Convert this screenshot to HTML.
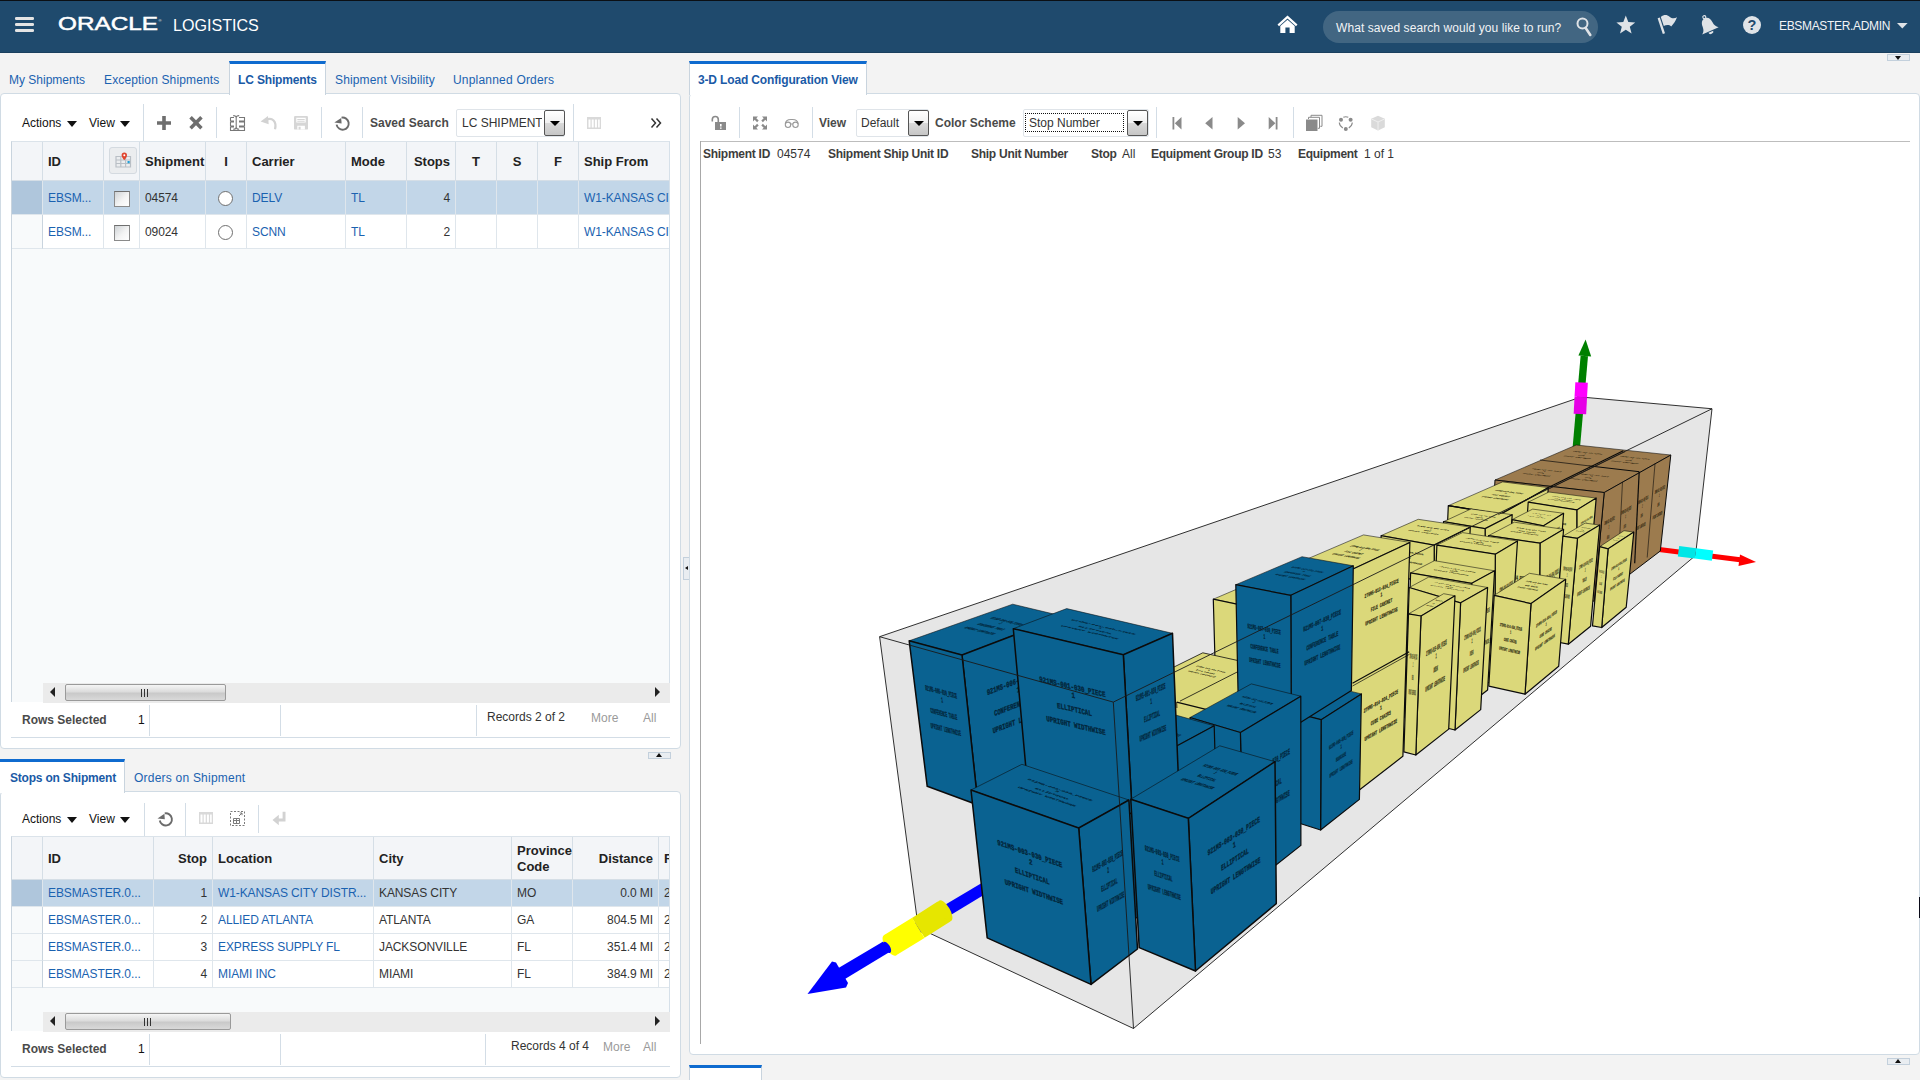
<!DOCTYPE html>
<html lang="en">
<head>
<meta charset="utf-8">
<title>Oracle Logistics - LC Shipments</title>
<style>
*{box-sizing:border-box;margin:0;padding:0}
html,body{width:1920px;height:1080px;overflow:hidden;background:#f3f3f3;font-family:"Liberation Sans",Arial,sans-serif;font-size:12px;color:#333}
.abs{position:absolute}
#hdr{position:absolute;left:0;top:0;width:1920px;height:53px;background:#1f4a6d;border-top:1px solid #0b0f14;border-bottom:1px solid #1a3f5e}
#hdr .t{position:absolute;color:#fff;white-space:nowrap}
.tab{position:absolute;top:72px;height:22px;line-height:16px;color:#1a62b0;white-space:nowrap;font-size:12px}
.tabact{position:absolute;background:#fff;border:1px solid #c9d4de;border-top:3px solid #0f6bcf;border-bottom:none;color:#1a5aa6;font-weight:bold;white-space:nowrap}
.panel{position:absolute;background:#fff;border:1px solid #d0dbe4;border-radius:4px}
.sep{position:absolute;width:1px;background:#d3dde6}
.tx{position:absolute;white-space:nowrap;line-height:14px}
.b{font-weight:bold}
.lnk{color:#1a62b0}
.tbl{position:absolute;border-right:1px solid #d6e0e9;border-left:1px solid #c9d4de;border-top:1px solid #dbe3ea;background-color:#f8fafb;overflow:hidden}
.cell{letter-spacing:-0.1px;position:absolute;border-right:1px solid #dfe6ec;border-bottom:1px solid #dfe6ec;white-space:nowrap;overflow:hidden;padding:0 5px;font-size:12px}
.hd{letter-spacing:0;background:#f3f5f8;font-weight:bold;font-size:13px;color:#222;border-right:1px solid #d5dee6;border-bottom:1px solid #d5dee6}
.sel{background:#c2d6e8}
.wh{background:#fff}
.r{text-align:right}
.dd{position:absolute;background:#fff;border:1px solid #dfe4e9;border-radius:2px}
.ddb{position:absolute;border:1px solid #555;border-radius:2px;background:linear-gradient(#ffffff,#f1f1f1 49%,#d9d9d9 51%,#c6c6c6)}
.ddb:after{content:"";position:absolute;left:50%;top:50%;margin:-2px 0 0 -5px;border:5px solid transparent;border-top:5px solid #000;border-bottom:none}
.sb{position:absolute;background:#ebebeb;height:20px}
.thumb{position:absolute;top:1px;height:17px;border:1px solid #9a9a9a;border-radius:2px;background:linear-gradient(#f5f5f5,#dcdcdc 45%,#c9c9c9 55%,#d9d9d9)}
.grip{position:absolute;top:4px;width:1px;height:8px;background:#333}
.arl{position:absolute;width:0;height:0;border:5px solid transparent;border-right:5px solid #222;border-left:none}
.arr{position:absolute;width:0;height:0;border:5px solid transparent;border-left:5px solid #222;border-right:none}
.gray{color:#9a9a9a}
</style>
</head>
<body>
<div id="hdr">
<svg class="abs" style="left:0;top:-1px" width="1920" height="53" viewBox="0 0 1920 53">
 <!-- hamburger -->
 <g fill="#e4e4e4"><rect x="15" y="17" width="19" height="3" rx="1.3"/><rect x="15" y="23" width="19" height="3" rx="1.3"/><rect x="15" y="29" width="19" height="3" rx="1.3"/></g>
 <!-- ORACLE wordmark -->
 <text x="58" y="30" font-family="Liberation Sans, Arial, sans-serif" font-size="17.6" fill="#fff" stroke="#fff" stroke-width="0.45" textLength="100" lengthAdjust="spacingAndGlyphs">ORACLE</text>
 <text x="158.5" y="21.5" font-family="Liberation Sans, Arial, sans-serif" font-size="4" fill="#fff">®</text>
 <!-- home -->
 <g fill="#fff"><path d="M1287.5 15.5 L1277.5 24.6 L1279 26.2 L1287.5 18.6 L1296 26.2 L1297.5 24.6 Z"/><path d="M1280.3 26 L1287.5 19.8 L1294.7 26 L1294.7 33 L1289.6 33 L1289.6 27.6 L1285.4 27.6 L1285.4 33 L1280.3 33 Z"/></g>
 <!-- search pill -->
 <rect x="1323" y="11" width="275" height="32" rx="16" fill="#426682"/>
 <g fill="none" stroke="#dfe3e7" stroke-width="2"><circle cx="1582.5" cy="23.5" r="5"/><path d="M1585.5 27.8 L1590.3 35" stroke-width="2.6" stroke-linecap="round"/></g>
 <!-- star -->
 <path fill="#dfe3e7" d="M1625.8 15.6 L1628.3 22.1 L1635.2 22.4 L1629.8 26.8 L1631.6 33.4 L1625.8 29.7 L1620 33.4 L1621.8 26.8 L1616.4 22.4 L1623.3 22.1 Z"/>
 <!-- flag -->
 <g fill="#dfe3e7"><path d="M1657.6 18.2 L1659.8 17.4 L1665 33.2 L1662.8 34 Z"/><path d="M1660.8 17 C1664 14.4 1667 14.6 1669.6 16.8 C1672 18.8 1674.6 18.8 1677 17.2 C1675.6 21 1673.4 24.2 1671.2 26.4 C1669.4 24.6 1666.4 24.4 1663.8 26 Z"/></g>
 <!-- bell -->
 <g fill="#dfe3e7" transform="translate(1707.9 25.2) rotate(-24)"><path d="M0 -7.6 C3.6 -7.6 5.2 -4.4 5.4 -0.8 C5.6 2.6 6.6 4.4 9 6.2 L-9 6.2 C-6.600 4.400 -5.600 2.600 -5.400 -0.800 C-5.200 -4.400 -3.600 -7.600 0 -7.600 Z"/><circle cx="0" cy="-8.8" r="1.5" fill="none" stroke="#dfe3e7" stroke-width="1.1"/><path d="M-2.600 7.200 L2.600 7.200 A2.600 2.200 0 0 1 -2.600 7.200 Z"/></g>
 <!-- help -->
 <circle cx="1752" cy="25" r="9" fill="#dfe3e7"/>
 <text x="1752" y="30.2" text-anchor="middle" font-family="Liberation Sans, Arial, sans-serif" font-weight="bold" font-size="14.5" fill="#1f4a6d">?</text>
 <!-- user arrow -->
 <path fill="#dfe3e7" d="M1897 23 L1907.6 23 L1902.3 28.4 Z"/>
</svg>
<div class="t" style="left:173px;top:14px;font-size:16.1px;line-height:20px">LOGISTICS</div>
<div class="t" style="left:1336px;top:19px;font-size:12px;line-height:16px;letter-spacing:0.08px;color:#f2f4f6">What saved search would you like to run?</div>
<div class="t" style="left:1779px;top:17px;font-size:12px;line-height:16px;letter-spacing:-0.33px;color:#f2f4f6">EBSMASTER.ADMIN</div>
</div>
<div id="left">
<div class="tab" style="left:9px;top:72px">My Shipments</div>
<div class="tab" style="left:104px;top:72px;letter-spacing:0.14px">Exception Shipments</div>
<div class="tab" style="left:335px;top:72px;letter-spacing:0.15px">Shipment Visibility</div>
<div class="tab" style="left:453px;top:72px;letter-spacing:0.2px">Unplanned Orders</div>
<div class="panel" style="left:0;top:93px;width:681px;height:656px"></div>
<div class="tabact" style="left:229px;top:61px;width:97px;height:34px;padding:8px 0 0 8px;line-height:16px;letter-spacing:-0.15px">LC Shipments</div>
<div class="tx" style="left:22px;top:116px;color:#111">Actions</div>
<div class="abs" style="left:67px;top:121px;border:5px solid transparent;border-top:6px solid #111;border-bottom:none"></div>
<div class="tx" style="left:89px;top:116px;color:#111">View</div>
<div class="abs" style="left:120px;top:121px;border:5px solid transparent;border-top:6px solid #111;border-bottom:none"></div>
<div class="sep" style="left:143px;top:104px;height:37px"></div>
<div class="sep" style="left:216px;top:107px;height:31px"></div>
<div class="sep" style="left:321px;top:107px;height:31px"></div>
<div class="sep" style="left:362px;top:107px;height:31px"></div>
<div class="sep" style="left:573px;top:104px;height:37px"></div>
<svg class="abs" style="left:0;top:100px" width="680" height="44" viewBox="0 100 680 44">
<g fill="#6e6e6e">
 <path d="M162.2 116 h3.600 v5.200 h5.200 v3.600 h-5.200 v5.200 h-3.600 v-5.200 h-5.200 v-3.600 h5.200z"/>
 <path d="M189.300 118.500 L191.800 116 L196 120.200 L200.200 116 L202.700 118.500 L198.500 122.700 L202.700 126.900 L200.200 129.400 L196 125.200 L191.800 129.400 L189.300 126.900 L193.500 122.700Z"/>
</g>
<g fill="none" stroke="#777" stroke-width="1.100">
 <path d="M233.200 115.600 c1.700 0 3 .6 3 2 v9.600 c0 1.400 -1.300 2 -3 2 M239.200 115.600 c-1.700 0 -3 .6 -3 2 M236.200 127.200 c0 1.400 1.300 2 3 2"/>
 <path d="M230.500 117.500 h3.500 M230.500 117.500 v3.500 h3.500 M230.500 122 v4 h3.500 M230.500 122 h3.500 M230.500 127 v3.500 h14 v-3.500 M230.500 127 h3.500 M239 117.500 h5.500 v3.500 h-5.500 M239 122 h5.500 v4 h-5.500 M239 127 h5.500"/>
</g>
<path fill="none" stroke="#d2d2d2" stroke-width="2.200" d="M266.500 119.800 c5.500 -2.600 10.500 1.500 8.500 9.500"/>
<path fill="#d2d2d2" d="M260.600 121.500 l7.400 -5.500 l.7 8.300z"/>
<g><rect x="294" y="116" width="14" height="13.600" rx="1.200" fill="#d6d6d6"/><path fill="#fff" d="M296.300 117.800 h9.400 v4.800 h-9.400z M297.300 125.800 h7.600 v3.800 h-7.600z"/><path fill="#d6d6d6" d="M297.300 119 h7.400 v.9 h-7.400z M297.300 120.800 h7.400 v.9 h-7.400z M298.600 126.800 h2 v2.800 h-2z"/></g>
<path fill="none" stroke="#6b6b6b" stroke-width="1.9" d="M341.54 117.59 A6.1 6.1 0 1 1 336.59 124.66"/><path fill="#6b6b6b" d="M334.30 122.60 L341.20 118.00 L341.60 123.40Z"/>
<g fill="#d9d9d9"><path d="M587 117 h14 v12 h-14z"/><path fill="#fff" d="M588.500 119.500 h2 v8 h-2z M591.700 119.500 h2 v8 h-2z M594.900 119.500 h2 v8 h-2z M598.100 119.500 h1.600 v8 h-1.600z"/></g>
<g fill="none" stroke="#333" stroke-width="1.500"><path d="M651.500 118.500 l4 4.500 l-4 4.500 M656.500 118.500 l4 4.500 l-4 4.500"/></g>
</svg>

<div class="tx b" style="left:370px;top:116px;color:#4a4a4a">Saved Search</div>
<div class="dd" style="left:456px;top:109px;width:109px;height:28px"></div>
<div class="tx" style="left:462px;top:116px;color:#333;width:80px;overflow:hidden">LC SHIPMENT</div>
<div class="ddb" style="left:544px;top:110px;width:21px;height:26px"></div>
<div class="tbl" style="left:11px;top:141px;width:659px;height:561px">
<div class="cell hd" style="left:0px;top:0;width:31px;height:39px;line-height:39.5px"></div>
<div class="cell hd" style="left:31px;top:0;width:61px;height:39px;line-height:39.5px">ID</div>
<div class="cell hd" style="left:92px;top:0;width:36px;height:39px;line-height:39.5px"><span style="position:absolute;left:5px;top:5px;width:28px;height:27px;border:1px solid #d4dae0;border-radius:3px;background:#ebedef"><svg width="26" height="25" viewBox="0 0 26 25" style="position:absolute;left:0;top:0"><g fill="none" stroke="#b9bfc5" stroke-width="1.200"><path d="M6 8.500 h14.500 v10.500 h-14.500z M6 12 h14.500 M6 15.500 h14.500 M10.800 8.500 v10.500 M15.600 8.500 v10.500"/></g><path fill="#e0452f" d="M14.300 4.500 a2.700 2.700 0 0 1 2.700 2.700 c0 2 -2.700 5 -2.700 5 c0 0 -2.700 -3 -2.700 -5 a2.700 2.700 0 0 1 2.700 -2.700z"/><circle cx="14.300" cy="7.200" r="1" fill="#fff"/><rect x="17.500" y="13" width="2.200" height="2.200" fill="#21a0d8"/></svg></span></div>
<div class="cell hd" style="left:128px;top:0;width:66px;height:39px;line-height:39.5px">Shipment</div>
<div class="cell hd" style="left:194px;top:0;width:41px;height:39px;line-height:39.5px;text-align:center">I</div>
<div class="cell hd" style="left:235px;top:0;width:99px;height:39px;line-height:39.5px">Carrier</div>
<div class="cell hd" style="left:334px;top:0;width:61px;height:39px;line-height:39.5px">Mode</div>
<div class="cell hd r" style="left:395px;top:0;width:49px;height:39px;line-height:39.5px">Stops</div>
<div class="cell hd" style="left:444px;top:0;width:41px;height:39px;line-height:39.5px;text-align:center">T</div>
<div class="cell hd" style="left:485px;top:0;width:41px;height:39px;line-height:39.5px;text-align:center">S</div>
<div class="cell hd" style="left:526px;top:0;width:41px;height:39px;line-height:39.5px;text-align:center">F</div>
<div class="cell hd" style="left:567px;top:0;width:100px;height:39px;line-height:39.5px">Ship From</div>
<div class="cell sel" style="left:0px;top:39px;width:31px;height:34px;line-height:35px;background:#afc6dc"></div>
<div class="cell sel" style="left:31px;top:39px;width:61px;height:34px;line-height:35px"><span class="lnk">EBSM...</span></div>
<div class="cell sel" style="left:92px;top:39px;width:36px;height:34px;line-height:35px"><span style="display:inline-block;width:16px;height:16px;border:1px solid #8a8a8a;border-top-color:#6f6f6f;background:linear-gradient(135deg,#cfd3d6,#f4f4f4 55%,#fff);vertical-align:middle;margin:1px 0 0 5px"></span></div>
<div class="cell sel" style="left:128px;top:39px;width:66px;height:34px;line-height:35px">04574</div>
<div class="cell sel" style="left:194px;top:39px;width:41px;height:34px;line-height:35px"><span style="display:inline-block;width:15px;height:15px;border:1.500px solid #6f6f6f;border-radius:50%;background:#fff;vertical-align:middle;margin:0 0 0 7px"></span></div>
<div class="cell sel" style="left:235px;top:39px;width:99px;height:34px;line-height:35px"><span class="lnk">DELV</span></div>
<div class="cell sel" style="left:334px;top:39px;width:61px;height:34px;line-height:35px"><span class="lnk">TL</span></div>
<div class="cell sel r" style="left:395px;top:39px;width:49px;height:34px;line-height:35px">4</div>
<div class="cell sel" style="left:444px;top:39px;width:41px;height:34px;line-height:35px"></div>
<div class="cell sel" style="left:485px;top:39px;width:41px;height:34px;line-height:35px"></div>
<div class="cell sel" style="left:526px;top:39px;width:41px;height:34px;line-height:35px"></div>
<div class="cell sel" style="left:567px;top:39px;width:100px;height:34px;line-height:35px"><span class="lnk">W1-KANSAS CITY</span></div>
<div class="cell wh" style="left:0px;top:73px;width:31px;height:34px;line-height:35px;background:#f8fafb;border-right:1px solid #c9d4de"></div>
<div class="cell wh" style="left:31px;top:73px;width:61px;height:34px;line-height:35px"><span class="lnk">EBSM...</span></div>
<div class="cell wh" style="left:92px;top:73px;width:36px;height:34px;line-height:35px"><span style="display:inline-block;width:16px;height:16px;border:1px solid #8a8a8a;border-top-color:#6f6f6f;background:linear-gradient(135deg,#cfd3d6,#f4f4f4 55%,#fff);vertical-align:middle;margin:1px 0 0 5px"></span></div>
<div class="cell wh" style="left:128px;top:73px;width:66px;height:34px;line-height:35px">09024</div>
<div class="cell wh" style="left:194px;top:73px;width:41px;height:34px;line-height:35px"><span style="display:inline-block;width:15px;height:15px;border:1.500px solid #6f6f6f;border-radius:50%;background:#fff;vertical-align:middle;margin:0 0 0 7px"></span></div>
<div class="cell wh" style="left:235px;top:73px;width:99px;height:34px;line-height:35px"><span class="lnk">SCNN</span></div>
<div class="cell wh" style="left:334px;top:73px;width:61px;height:34px;line-height:35px"><span class="lnk">TL</span></div>
<div class="cell wh r" style="left:395px;top:73px;width:49px;height:34px;line-height:35px">2</div>
<div class="cell wh" style="left:444px;top:73px;width:41px;height:34px;line-height:35px"></div>
<div class="cell wh" style="left:485px;top:73px;width:41px;height:34px;line-height:35px"></div>
<div class="cell wh" style="left:526px;top:73px;width:41px;height:34px;line-height:35px"></div>
<div class="cell wh" style="left:567px;top:73px;width:100px;height:34px;line-height:35px"><span class="lnk">W1-KANSAS CITY</span></div>
</div>
<div class="sb" style="left:43px;top:683px;width:627px"><div class="arl" style="left:7px;top:4px"></div><div class="thumb" style="left:22px;width:161px"><div class="grip" style="left:75px"></div><div class="grip" style="left:78px"></div><div class="grip" style="left:81px"></div></div><div class="arr" style="left:612px;top:4px"></div></div>
<div class="tx b" style="left:22px;top:713px;color:#4a4a4a">Rows Selected</div>
<div class="tx" style="left:138px;top:713px;color:#111">1</div>
<div class="sep" style="left:149px;top:705px;height:31px"></div>
<div class="sep" style="left:280px;top:705px;height:31px"></div>
<div class="sep" style="left:476px;top:705px;height:31px"></div>
<div class="tx" style="left:487px;top:710px;color:#333">Records 2 of 2</div>
<div class="tx gray" style="left:591px;top:711px">More</div>
<div class="tx gray" style="left:643px;top:711px">All</div>
<div class="abs" style="left:11px;top:737px;width:659px;height:1px;background:#d3dde6"></div>
<div class="abs" style="left:648px;top:752px;width:23px;height:7px;border:1px solid #c3d0dc;background:#e9edf1"></div><div class="abs" style="left:656px;top:753px;border:3.500px solid transparent;border-bottom:4px solid #111;border-top:none"></div>
<div class="tab" style="left:134px;top:770px;letter-spacing:0.22px">Orders on Shipment</div>
<div class="panel" style="left:0;top:791px;width:681px;height:287px"></div>
<div class="tabact" style="left:0;top:759px;width:125px;height:34px;padding:8px 0 0 10px;line-height:16px;letter-spacing:-0.2px;border-left:none">Stops on Shipment</div>
<div class="tx" style="left:22px;top:812px;color:#111">Actions</div>
<div class="abs" style="left:67px;top:817px;border:5px solid transparent;border-top:6px solid #111;border-bottom:none"></div>
<div class="tx" style="left:89px;top:812px;color:#111">View</div>
<div class="abs" style="left:120px;top:817px;border:5px solid transparent;border-top:6px solid #111;border-bottom:none"></div>
<div class="sep" style="left:144px;top:803px;height:33px"></div>
<div class="sep" style="left:185px;top:803px;height:33px"></div>
<div class="sep" style="left:258px;top:805px;height:28px"></div>
<svg class="abs" style="left:0;top:800px" width="680" height="40" viewBox="0 800 680 40">
<path fill="none" stroke="#6b6b6b" stroke-width="1.9" d="M164.74 813.39 A6.1 6.1 0 1 1 159.79 820.46"/><path fill="#6b6b6b" d="M157.50 818.40 L164.40 813.80 L164.80 819.20Z"/>
<g fill="#d9d9d9"><path d="M199 812 h14 v12 h-14z"/><path fill="#fff" d="M200.500 814.500 h2 v8 h-2z M203.700 814.500 h2 v8 h-2z M206.900 814.500 h2 v8 h-2z M210.100 814.500 h1.600 v8 h-1.600z"/></g>
<g fill="none" stroke="#7b7b7b" stroke-width="1" stroke-dasharray="2 1.500"><path d="M230.500 811.500 h14 v14 h-14z"/></g>
<g fill="none" stroke="#7b7b7b" stroke-width="1"><path d="M233.500 818.500 h6 v5 h-6z M233.500 820.500 h6 M236.500 818.500 v5 M239 816 l3 -3 M239.800 813 h2.200 v2.200"/></g>
<g fill="#d2d2d2"><path d="M282.600 811.800 h2.900 v9.800 h-6.700 v3.600 l-6.300 -5.200 l6.300 -5.200 v3.600 h3.800z"/></g>
</svg>

<div class="tbl" style="left:11px;top:836px;width:659px;height:195px">
<div class="cell hd" style="left:0px;top:0;width:31px;height:43px;line-height:43.5px"></div>
<div class="cell hd" style="left:31px;top:0;width:111px;height:43px;line-height:43.5px">ID</div>
<div class="cell hd r" style="left:142px;top:0;width:59px;height:43px;line-height:43.5px">Stop</div>
<div class="cell hd" style="left:201px;top:0;width:161px;height:43px;line-height:43.5px">Location</div>
<div class="cell hd" style="left:362px;top:0;width:138px;height:43px;line-height:43.5px">City</div>
<div class="cell hd" style="left:500px;top:0;width:61px;height:43px;line-height:43.5px;line-height:16px;padding-top:6px">Province<br>Code</div>
<div class="cell hd r" style="left:561px;top:0;width:86px;height:43px;line-height:43.5px">Distance</div>
<div class="cell hd" style="left:647px;top:0;width:20px;height:43px;line-height:43.5px">R</div>
<div class="cell sel" style="left:0px;top:43px;width:31px;height:27px;line-height:27px;background:#afc6dc"></div>
<div class="cell sel" style="left:31px;top:43px;width:111px;height:27px;line-height:27px"><span class="lnk">EBSMASTER.0...</span></div>
<div class="cell sel r" style="left:142px;top:43px;width:59px;height:27px;line-height:27px">1</div>
<div class="cell sel" style="left:201px;top:43px;width:161px;height:27px;line-height:27px"><span class="lnk">W1-KANSAS CITY DISTR...</span></div>
<div class="cell sel" style="left:362px;top:43px;width:138px;height:27px;line-height:27px">KANSAS CITY</div>
<div class="cell sel" style="left:500px;top:43px;width:61px;height:27px;line-height:27px">MO</div>
<div class="cell sel r" style="left:561px;top:43px;width:86px;height:27px;line-height:27px">0.0 MI</div>
<div class="cell sel" style="left:647px;top:43px;width:20px;height:27px;line-height:27px">2</div>
<div class="cell wh" style="left:0px;top:70px;width:31px;height:27px;line-height:27px;background:#f8fafb;border-right:1px solid #c9d4de"></div>
<div class="cell wh" style="left:31px;top:70px;width:111px;height:27px;line-height:27px"><span class="lnk">EBSMASTER.0...</span></div>
<div class="cell wh r" style="left:142px;top:70px;width:59px;height:27px;line-height:27px">2</div>
<div class="cell wh" style="left:201px;top:70px;width:161px;height:27px;line-height:27px"><span class="lnk">ALLIED ATLANTA</span></div>
<div class="cell wh" style="left:362px;top:70px;width:138px;height:27px;line-height:27px">ATLANTA</div>
<div class="cell wh" style="left:500px;top:70px;width:61px;height:27px;line-height:27px">GA</div>
<div class="cell wh r" style="left:561px;top:70px;width:86px;height:27px;line-height:27px">804.5 MI</div>
<div class="cell wh" style="left:647px;top:70px;width:20px;height:27px;line-height:27px">2</div>
<div class="cell wh" style="left:0px;top:97px;width:31px;height:27px;line-height:27px;background:#f8fafb;border-right:1px solid #c9d4de"></div>
<div class="cell wh" style="left:31px;top:97px;width:111px;height:27px;line-height:27px"><span class="lnk">EBSMASTER.0...</span></div>
<div class="cell wh r" style="left:142px;top:97px;width:59px;height:27px;line-height:27px">3</div>
<div class="cell wh" style="left:201px;top:97px;width:161px;height:27px;line-height:27px"><span class="lnk">EXPRESS SUPPLY FL</span></div>
<div class="cell wh" style="left:362px;top:97px;width:138px;height:27px;line-height:27px">JACKSONVILLE</div>
<div class="cell wh" style="left:500px;top:97px;width:61px;height:27px;line-height:27px">FL</div>
<div class="cell wh r" style="left:561px;top:97px;width:86px;height:27px;line-height:27px">351.4 MI</div>
<div class="cell wh" style="left:647px;top:97px;width:20px;height:27px;line-height:27px">2</div>
<div class="cell wh" style="left:0px;top:124px;width:31px;height:27px;line-height:27px;background:#f8fafb;border-right:1px solid #c9d4de"></div>
<div class="cell wh" style="left:31px;top:124px;width:111px;height:27px;line-height:27px"><span class="lnk">EBSMASTER.0...</span></div>
<div class="cell wh r" style="left:142px;top:124px;width:59px;height:27px;line-height:27px">4</div>
<div class="cell wh" style="left:201px;top:124px;width:161px;height:27px;line-height:27px"><span class="lnk">MIAMI INC</span></div>
<div class="cell wh" style="left:362px;top:124px;width:138px;height:27px;line-height:27px">MIAMI</div>
<div class="cell wh" style="left:500px;top:124px;width:61px;height:27px;line-height:27px">FL</div>
<div class="cell wh r" style="left:561px;top:124px;width:86px;height:27px;line-height:27px">384.9 MI</div>
<div class="cell wh" style="left:647px;top:124px;width:20px;height:27px;line-height:27px">2</div>
</div>
<div class="sb" style="left:43px;top:1012px;width:627px"><div class="arl" style="left:7px;top:4px"></div><div class="thumb" style="left:22px;width:166px"><div class="grip" style="left:78px"></div><div class="grip" style="left:81px"></div><div class="grip" style="left:84px"></div></div><div class="arr" style="left:612px;top:4px"></div></div>
<div class="tx b" style="left:22px;top:1042px;color:#4a4a4a">Rows Selected</div>
<div class="tx" style="left:138px;top:1042px;color:#111">1</div>
<div class="sep" style="left:149px;top:1034px;height:31px"></div>
<div class="sep" style="left:280px;top:1034px;height:31px"></div>
<div class="sep" style="left:485px;top:1034px;height:31px"></div>
<div class="tx" style="left:511px;top:1039px;color:#333">Records 4 of 4</div>
<div class="tx gray" style="left:603px;top:1040px">More</div>
<div class="tx gray" style="left:643px;top:1040px">All</div>
<div class="abs" style="left:11px;top:1066px;width:659px;height:1px;background:#d3dde6"></div>
<div class="abs" style="left:683px;top:557px;width:7px;height:23px;border:1px solid #c3d0dc;border-right-color:#d3dde6;background:#e9edf1"></div><div class="abs" style="left:685px;top:566px;border:2.700px solid transparent;border-right:3.300px solid #111;border-left:none"></div>
</div>
<div id="right">
<div class="panel" style="left:689px;top:93px;width:1231px;height:962px;border-radius:4px"></div>
<div class="tabact" style="left:689px;top:61px;width:178px;height:34px;padding:8px 0 0 8px;line-height:16px;letter-spacing:-0.15px">3-D Load Configuration View</div>
<div class="abs" style="left:1887px;top:54px;width:23px;height:7px;border:1px solid #c3d0dc;background:#e9edf1"></div><div class="abs" style="left:1895px;top:56px;border:3.500px solid transparent;border-top:4px solid #111;border-bottom:none"></div>
<div class="abs" style="left:1887px;top:1058px;width:23px;height:7px;border:1px solid #c3d0dc;background:#e9edf1"></div><div class="abs" style="left:1895px;top:1059px;border:3.500px solid transparent;border-bottom:4px solid #111;border-top:none"></div>
<div class="abs" style="left:689px;top:1065px;width:73px;height:15px;background:#fff;border:1px solid #c9d4de;border-top:3px solid #0f6bcf;border-bottom:none"></div>
<div class="sep" style="left:739px;top:107px;height:31px"></div>
<div class="sep" style="left:812px;top:107px;height:31px"></div>
<div class="sep" style="left:1156px;top:107px;height:31px"></div>
<div class="sep" style="left:1293px;top:107px;height:31px"></div>
<div class="tx b" style="left:819px;top:116px;color:#4a4a4a">View</div>
<div class="dd" style="left:856px;top:109px;width:73px;height:28px"></div>
<div class="tx" style="left:861px;top:116px;color:#333">Default</div>
<div class="ddb" style="left:908px;top:110px;width:21px;height:26px"></div>
<div class="tx b" style="left:935px;top:116px;color:#4a4a4a">Color Scheme</div>
<div class="dd" style="left:1023px;top:109px;width:126px;height:28px"></div>
<div class="abs" style="left:1025px;top:113px;width:99px;height:19px;border:1px dotted #111"></div>
<div class="tx" style="left:1029px;top:116px;color:#333">Stop Number</div>
<div class="ddb" style="left:1127px;top:110px;width:21px;height:26px"></div>
<svg class="abs" style="left:700px;top:105px" width="720" height="36" viewBox="700 105 720 36">
<g fill="#8a8a8a"><path d="M715 122 h11 v8 h-11z"/><path fill="#fff" d="M720 124 h1.600 v2.600 h-1.600z M720 127.400 h1.600 v1.400 h-1.600z"/></g>
<path fill="none" stroke="#8a8a8a" stroke-width="1.600" d="M712.300 121.500 v-2 a3 3 0 0 1 6 0 v2.500"/>
<g fill="#8a8a8a">
 <path d="M753 116.500 h5 l-1.700 1.700 l2.400 2.400 l-1.600 1.600 l-2.400 -2.400 l-1.700 1.700z"/>
 <path d="M767 116.500 v5 l-1.700 -1.700 l-2.400 2.400 l-1.600 -1.600 l2.400 -2.400 l-1.700 -1.700z"/>
 <path d="M753 129.500 v-5 l1.700 1.700 l2.400 -2.400 l1.600 1.600 l-2.400 2.400 l1.700 1.700z"/>
 <path d="M767 129.500 h-5 l1.700 -1.700 l-2.400 -2.400 l1.600 -1.600 l2.400 2.400 l1.700 -1.700z"/>
</g>
<g fill="none" stroke="#9a9a9a" stroke-width="1.100"><circle cx="788" cy="124.800" r="2.700"/><circle cx="795.500" cy="124.800" r="2.700"/><path d="M790.700 124 h2.100 M785.300 123.800 c.3 -3.500 3 -4.500 6.400 -4.300 c3.400 -.2 6.100 .8 6.400 4.300"/></g>
<g fill="#8a8a8a">
 <path d="M1172.500 117 h1.800 v12.500 h-1.800z M1181.500 117 v12.500 l-6.700 -6.250z"/>
 <path d="M1212.500 117 v12.500 l-7.300 -6.250z"/>
 <path d="M1237.700 117 v12.500 l7.300 -6.250z"/>
 <path d="M1275.700 117 h1.800 v12.500 h-1.800z M1268.700 117 v12.500 l6.700 -6.250z"/>
 <path d="M1306 119.500 h11.500 v11.500 h-11.500z"/>
</g>
<g fill="none" stroke="#8a8a8a" stroke-width="1"><path d="M1308.500 119 v-1.700 h11 v11 h-1.700 M1311 117 v-1.700 h11 v11 h-1.700"/></g>
<g fill="#8a8a8a"><circle cx="1341" cy="119.800" r="2"/><circle cx="1350.600" cy="119.800" r="2"/><circle cx="1345.800" cy="129" r="2"/></g>
<g fill="none" stroke="#8a8a8a" stroke-width="1.100"><path d="M1343.300 117.300 q2.500 -1.200 5 0 M1352.300 122.500 q0 3 -3.500 5.500 M1342.800 128 q-3.500 -2.500 -3.500 -5.500"/></g>
<g fill="#dadada"><path d="M1378 115.800 l6.800 3 v8.400 l-6.800 3.400 l-6.800 -3.400 v-8.400z"/></g>
<g fill="none" stroke="#efefef" stroke-width="1"><path d="M1371.500 119 l6.500 3 l6.500 -3 M1378 122 v8.500"/></g>
</svg>
<div class="abs" style="left:700px;top:141px;width:1210px;height:1px;background:#bdbdbd"></div>
<div class="abs" style="left:700px;top:141px;width:1px;height:903px;background:#a8a8a8"></div>
<div class="tx b" style="left:703px;top:147px;letter-spacing:-0.27px;color:#3d3d3d">Shipment ID</div>
<div class="tx" style="left:777px;top:147px;color:#333">04574</div>
<div class="tx b" style="left:828px;top:147px;letter-spacing:-0.27px;color:#3d3d3d">Shipment Ship Unit ID</div>
<div class="tx b" style="left:971px;top:147px;letter-spacing:-0.27px;color:#3d3d3d">Ship Unit Number</div>
<div class="tx b" style="left:1091px;top:147px;letter-spacing:-0.27px;color:#3d3d3d">Stop</div>
<div class="tx" style="left:1122px;top:147px;color:#333">All</div>
<div class="tx b" style="left:1151px;top:147px;letter-spacing:-0.27px;color:#3d3d3d">Equipment Group ID</div>
<div class="tx" style="left:1268px;top:147px;color:#333">53</div>
<div class="tx b" style="left:1298px;top:147px;letter-spacing:-0.27px;color:#3d3d3d">Equipment</div>
<div class="tx" style="left:1364px;top:147px;color:#333">1 of 1</div>
<svg class="abs" style="left:701px;top:142px" width="1209" height="902" viewBox="701 142 1209 902">
<polygon points="879.6,636.7 1581.0,397.0 1712.0,408.8 1695.5,555.5 1133.5,1028.5 918.3,927.9" fill="#e6e6e6"/>
<line x1="1568.4" y1="538" x2="1584.3" y2="356" stroke="#008000" stroke-width="7.4"/>
<polygon points="1585.6,339.5 1591.2,356.5 1578.4,355.5" fill="#008000"/>
<line x1="1568.4" y1="538" x2="1742" y2="560" stroke="#ff0000" stroke-width="5.2"/>
<polygon points="1756,562 1738.5,566 1740,554.5" fill="#ff0000"/>
<polygon points="1568.4,535 1568.4,541 842.5,980.5 836,969.5" fill="#0000ff"/>
<polygon points="807.5,994 832,961.5 836,962.5 848,983 846,987.5" fill="#0000ff"/>
<g fill="#9c7b4e" stroke="#0b0b0b" stroke-width="1.0" stroke-linejoin="round">
<polygon points="1495.0,480.0 1576.2,445.0 1670.8,455.0 1604.2,492.5" stroke-width="0.55"/>
<polygon points="1604.2,492.5 1670.8,455.0 1660.3,551.0 1594.3,601.2"/>
<polygon points="1495.0,480.0 1604.2,492.5 1594.3,601.2 1489.1,582.8"/>
</g>
<line x1="1548.3" y1="487.5" x2="1623.3" y2="450.8" stroke="#0b0b0b" stroke-width="1.2"/>
<line x1="1550.0" y1="488.3" x2="1625.0" y2="451.7" stroke="#0b0b0b" stroke-width="0.6"/>
<line x1="1588.3" y1="465.8" x2="1639.2" y2="471.7" stroke="#0b0b0b" stroke-width="1.0"/>
<line x1="1540.0" y1="460.0" x2="1588.3" y2="465.8" stroke="#0b0b0b" stroke-width="0.7"/>
<line x1="1639.2" y1="471.7" x2="1634.7" y2="563.3" stroke="#0b0b0b" stroke-width="1.2"/>
<line x1="1622.5" y1="482.0" x2="1619.2" y2="546.7" stroke="#0b0b0b" stroke-width="0.6"/>
<line x1="1655.0" y1="463.8" x2="1647.2" y2="557.5" stroke="#0b0b0b" stroke-width="0.6"/>
<g transform="matrix(0.4730,0.0499,-0.4062,0.1749,1576.2,445.0)" font-size="5.3" fill="#2a1f0e" stroke="#2a1f0e" stroke-width="0.22" text-anchor="middle" font-family="Liberation Mono, DejaVu Sans Mono, monospace" font-weight="bold"><text x="50" y="31.9">3M8MS-021-038_PIECE</text><text x="50" y="37.6">1</text><text x="50" y="47.1">SOFA</text><text x="50" y="57.8">UPRIGHT LENGTHWISE</text></g>
<g transform="matrix(0.4730,0.0499,-0.4062,0.1749,1623.5,450.0)" font-size="5.3" fill="#2a1f0e" stroke="#2a1f0e" stroke-width="0.22" text-anchor="middle" font-family="Liberation Mono, DejaVu Sans Mono, monospace" font-weight="bold"><text x="50" y="31.9">3M8MS-021-038_PIECE</text><text x="50" y="37.6">1</text><text x="50" y="47.1">SOFA</text><text x="50" y="57.8">UPRIGHT LENGTHWISE</text></g>
<g transform="matrix(0.4730,0.0499,-0.4062,0.1749,1535.6,462.5)" font-size="5.3" fill="#2a1f0e" stroke="#2a1f0e" stroke-width="0.22" text-anchor="middle" font-family="Liberation Mono, DejaVu Sans Mono, monospace" font-weight="bold"><text x="50" y="31.9">3M8MS-021-038_PIECE</text><text x="50" y="37.6">1</text><text x="50" y="47.1">SOFA</text><text x="50" y="57.8">UPRIGHT LENGTHWISE</text></g>
<g transform="matrix(0.4730,0.0499,-0.4062,0.1749,1582.9,467.5)" font-size="5.3" fill="#2a1f0e" stroke="#2a1f0e" stroke-width="0.22" text-anchor="middle" font-family="Liberation Mono, DejaVu Sans Mono, monospace" font-weight="bold"><text x="50" y="31.9">3M8MS-021-038_PIECE</text><text x="50" y="37.6">1</text><text x="50" y="47.1">SOFA</text><text x="50" y="57.8">UPRIGHT LENGTHWISE</text></g>
<g transform="matrix(0.1667,-0.0938,-0.0984,1.0873,1604.2,492.5)" font-size="5.3" fill="#2a1f0e" stroke="#2a1f0e" stroke-width="0.22" text-anchor="middle" font-family="Liberation Mono, DejaVu Sans Mono, monospace" font-weight="bold"><text x="50" y="31.9">3M8MS-021-038_PIECE</text><text x="50" y="37.6">1</text><text x="50" y="47.1">SOFA</text><text x="50" y="57.8">UPRIGHT LENGTHWISE</text></g>
<g transform="matrix(0.1667,-0.0938,-0.0955,1.0547,1620.8,483.1)" font-size="5.3" fill="#2a1f0e" stroke="#2a1f0e" stroke-width="0.22" text-anchor="middle" font-family="Liberation Mono, DejaVu Sans Mono, monospace" font-weight="bold"><text x="50" y="31.9">3M8MS-021-038_PIECE</text><text x="50" y="37.6">1</text><text x="50" y="47.1">SOFA</text><text x="50" y="57.8">UPRIGHT LENGTHWISE</text></g>
<g transform="matrix(0.1667,-0.0938,-0.0925,1.0221,1637.5,473.8)" font-size="5.3" fill="#2a1f0e" stroke="#2a1f0e" stroke-width="0.22" text-anchor="middle" font-family="Liberation Mono, DejaVu Sans Mono, monospace" font-weight="bold"><text x="50" y="31.9">3M8MS-021-038_PIECE</text><text x="50" y="37.6">1</text><text x="50" y="47.1">SOFA</text><text x="50" y="57.8">UPRIGHT LENGTHWISE</text></g>
<g transform="matrix(0.1667,-0.0938,-0.0896,0.9895,1654.2,464.4)" font-size="5.3" fill="#2a1f0e" stroke="#2a1f0e" stroke-width="0.22" text-anchor="middle" font-family="Liberation Mono, DejaVu Sans Mono, monospace" font-weight="bold"><text x="50" y="31.9">3M8MS-021-038_PIECE</text><text x="50" y="37.6">1</text><text x="50" y="47.1">SOFA</text><text x="50" y="57.8">UPRIGHT LENGTHWISE</text></g>
<g fill="#dbd87a" stroke="#0b0b0b" stroke-width="1.2" stroke-linejoin="round">
<polygon points="1448.3,505.7 1502.6,481.9 1548.3,487.6 1501.1,514.0" stroke-width="0.55"/>
<polygon points="1501.1,514.0 1548.3,487.6 1544.6,538.3 1501.1,563.3"/>
<polygon points="1448.3,505.7 1501.1,514.0 1501.1,563.3 1446.2,554.3"/>
</g>
<g transform="matrix(0.5278,0.0833,-0.0213,0.4859,1448.3,505.7)" font-size="5.3" fill="#2f2d12" stroke="#2f2d12" stroke-width="0.22" text-anchor="middle" font-family="Liberation Mono, DejaVu Sans Mono, monospace" font-weight="bold"><text x="50" y="31.9">2T9MS-013-034_PIECE</text><text x="50" y="37.6">1</text><text x="50" y="47.1">FILE CABINET</text><text x="50" y="57.8">UPRIGHT LENGTHWISE</text></g>
<g transform="matrix(0.4722,-0.2639,0.0000,0.4931,1501.1,514.0)" font-size="5.3" fill="#2f2d12" stroke="#2f2d12" stroke-width="0.22" text-anchor="middle" font-family="Liberation Mono, DejaVu Sans Mono, monospace" font-weight="bold"><text x="50" y="31.9">2T9MS-013-034_PIECE</text><text x="50" y="37.6">1</text><text x="50" y="47.1">FILE CABINET</text><text x="50" y="57.8">UPRIGHT LENGTHWISE</text></g>
<g transform="matrix(0.4574,0.0579,-0.5426,0.2384,1502.6,481.9)" font-size="5.3" fill="#2f2d12" stroke="#2f2d12" stroke-width="0.22" text-anchor="middle" font-family="Liberation Mono, DejaVu Sans Mono, monospace" font-weight="bold"><text x="50" y="31.9">2T9MS-013-034_PIECE</text><text x="50" y="37.6">1</text><text x="50" y="47.1">FILE CABINET</text><text x="50" y="57.8">UPRIGHT LENGTHWISE</text></g>
<g fill="#dbd87a" stroke="#0b0b0b" stroke-width="1.2" stroke-linejoin="round">
<polygon points="1528.2,502.2 1548.9,492.0 1596.2,498.1 1576.8,509.9" stroke-width="0.55"/>
<polygon points="1576.8,509.9 1596.2,498.1 1591.3,553.7 1576.8,563.3"/>
<polygon points="1528.2,502.2 1576.8,509.9 1576.8,563.3 1524.6,555.0"/>
</g>
<g transform="matrix(0.4861,0.0764,-0.0359,0.5281,1528.2,502.2)" font-size="5.3" fill="#2f2d12" stroke="#2f2d12" stroke-width="0.22" text-anchor="middle" font-family="Liberation Mono, DejaVu Sans Mono, monospace" font-weight="bold"><text x="50" y="31.9">2T9MS-013-034_PIECE</text><text x="50" y="37.6">1</text><text x="50" y="47.1">FILE CABINET</text><text x="50" y="57.8">UPRIGHT LENGTHWISE</text></g>
<g transform="matrix(0.1944,-0.1181,0.0000,0.5347,1576.8,509.9)" font-size="5.3" fill="#2f2d12" stroke="#2f2d12" stroke-width="0.22" text-anchor="middle" font-family="Liberation Mono, DejaVu Sans Mono, monospace" font-weight="bold"><text x="50" y="31.9">2T9MS-013-034_PIECE</text><text x="50" y="37.6">1</text><text x="50" y="47.1">FILE CABINET</text><text x="50" y="57.8">UPRIGHT LENGTHWISE</text></g>
<g transform="matrix(0.4737,0.0608,-0.2068,0.1025,1548.9,492.0)" font-size="5.3" fill="#2f2d12" stroke="#2f2d12" stroke-width="0.22" text-anchor="middle" font-family="Liberation Mono, DejaVu Sans Mono, monospace" font-weight="bold"><text x="50" y="31.9">2T9MS-013-034_PIECE</text><text x="50" y="37.6">1</text><text x="50" y="47.1">FILE CABINET</text><text x="50" y="57.8">UPRIGHT LENGTHWISE</text></g>
<g fill="#dbd87a" stroke="#0b0b0b" stroke-width="1.2" stroke-linejoin="round">
<polygon points="1443.5,521.7 1471.1,508.9 1512.2,514.7 1485.1,528.6" stroke-width="0.55"/>
<polygon points="1485.1,528.6 1512.2,514.7 1510.0,549.4 1485.1,563.3"/>
<polygon points="1443.5,521.7 1485.1,528.6 1485.1,563.3 1442.0,556.2"/>
</g>
<g transform="matrix(0.4167,0.0694,-0.0147,0.3451,1443.5,521.7)" font-size="5.3" fill="#2f2d12" stroke="#2f2d12" stroke-width="0.22" text-anchor="middle" font-family="Liberation Mono, DejaVu Sans Mono, monospace" font-weight="bold"><text x="50" y="31.9">2T9MS-016-034_PIECE</text><text x="50" y="37.6">1</text><text x="50" y="47.1">TABLES</text><text x="50" y="57.8">UPRIGHT LENGTHWISE</text></g>
<g transform="matrix(0.2708,-0.1389,0.0000,0.3472,1485.1,528.6)" font-size="5.3" fill="#2f2d12" stroke="#2f2d12" stroke-width="0.22" text-anchor="middle" font-family="Liberation Mono, DejaVu Sans Mono, monospace" font-weight="bold"><text x="50" y="31.9">2T9MS-016-034_PIECE</text><text x="50" y="37.6">1</text><text x="50" y="47.1">TABLES</text><text x="50" y="57.8">UPRIGHT LENGTHWISE</text></g>
<g transform="matrix(0.4109,0.0580,-0.2766,0.1275,1471.1,508.9)" font-size="5.3" fill="#2f2d12" stroke="#2f2d12" stroke-width="0.22" text-anchor="middle" font-family="Liberation Mono, DejaVu Sans Mono, monospace" font-weight="bold"><text x="50" y="31.9">2T9MS-016-034_PIECE</text><text x="50" y="37.6">1</text><text x="50" y="47.1">TABLES</text><text x="50" y="57.8">UPRIGHT LENGTHWISE</text></g>
<g fill="#dbd87a" stroke="#0b0b0b" stroke-width="1.2" stroke-linejoin="round">
<polygon points="1512.2,519.6 1532.7,509.1 1563.6,513.3 1543.5,525.8" stroke-width="0.55"/>
<polygon points="1543.5,525.8 1563.6,513.3 1560.5,552.8 1543.5,563.3"/>
<polygon points="1512.2,519.6 1543.5,525.8 1543.5,563.3 1509.8,557.9"/>
</g>
<g transform="matrix(0.3125,0.0625,-0.0243,0.3831,1512.2,519.6)" font-size="5.3" fill="#2f2d12" stroke="#2f2d12" stroke-width="0.22" text-anchor="middle" font-family="Liberation Mono, DejaVu Sans Mono, monospace" font-weight="bold"><text x="50" y="31.9">2T9MS-016-034_PIECE</text><text x="50" y="37.6">1</text><text x="50" y="47.1">TABLES</text><text x="50" y="57.8">UPRIGHT LENGTHWISE</text></g>
<g transform="matrix(0.2014,-0.1250,0.0000,0.3750,1543.5,525.8)" font-size="5.3" fill="#2f2d12" stroke="#2f2d12" stroke-width="0.22" text-anchor="middle" font-family="Liberation Mono, DejaVu Sans Mono, monospace" font-weight="bold"><text x="50" y="31.9">2T9MS-016-034_PIECE</text><text x="50" y="37.6">1</text><text x="50" y="47.1">TABLES</text><text x="50" y="57.8">UPRIGHT LENGTHWISE</text></g>
<g transform="matrix(0.3089,0.0424,-0.2050,0.1049,1532.7,509.1)" font-size="5.3" fill="#2f2d12" stroke="#2f2d12" stroke-width="0.22" text-anchor="middle" font-family="Liberation Mono, DejaVu Sans Mono, monospace" font-weight="bold"><text x="50" y="31.9">2T9MS-016-034_PIECE</text><text x="50" y="37.6">1</text><text x="50" y="47.1">TABLES</text><text x="50" y="57.8">UPRIGHT LENGTHWISE</text></g>
<g fill="#dbd87a" stroke="#0b0b0b" stroke-width="1.2" stroke-linejoin="round">
<polygon points="1488.6,535.6 1514.4,522.2 1563.6,529.3 1540.0,543.2" stroke-width="0.55"/>
<polygon points="1540.0,543.2 1563.6,529.3 1553.2,660.4 1539.0,672.0"/>
<polygon points="1488.6,535.6 1540.0,543.2 1539.0,672.0 1481.6,659.8"/>
</g>
<g transform="matrix(0.5139,0.0764,-0.0703,1.2428,1488.6,535.6)" font-size="5.3" fill="#2f2d12" stroke="#2f2d12" stroke-width="0.22" text-anchor="middle" font-family="Liberation Mono, DejaVu Sans Mono, monospace" font-weight="bold"><text x="50" y="31.9">2T9MS-014-034_PIECE</text><text x="50" y="37.6">1</text><text x="50" y="47.1">CUBE CHAIRS</text><text x="50" y="57.8">UPRIGHT LENGTHWISE</text></g>
<g transform="matrix(0.2361,-0.1389,-0.0100,1.2881,1540.0,543.2)" font-size="5.3" fill="#2f2d12" stroke="#2f2d12" stroke-width="0.22" text-anchor="middle" font-family="Liberation Mono, DejaVu Sans Mono, monospace" font-weight="bold"><text x="50" y="31.9">2T9MS-014-034_PIECE</text><text x="50" y="37.6">1</text><text x="50" y="47.1">CUBE CHAIRS</text><text x="50" y="57.8">UPRIGHT LENGTHWISE</text></g>
<g transform="matrix(0.4922,0.0712,-0.2578,0.1337,1514.4,522.2)" font-size="5.3" fill="#2f2d12" stroke="#2f2d12" stroke-width="0.22" text-anchor="middle" font-family="Liberation Mono, DejaVu Sans Mono, monospace" font-weight="bold"><text x="50" y="31.9">2T9MS-014-034_PIECE</text><text x="50" y="37.6">1</text><text x="50" y="47.1">CUBE CHAIRS</text><text x="50" y="57.8">UPRIGHT LENGTHWISE</text></g>
<g fill="#dbd87a" stroke="#0b0b0b" stroke-width="1.2" stroke-linejoin="round">
<polygon points="1381.1,535.6 1418.2,519.3 1470.3,527.1 1434.2,545.1" stroke-width="0.55"/>
<polygon points="1434.2,545.1 1470.3,527.1 1468.4,564.6 1434.2,583.3"/>
<polygon points="1381.1,535.6 1434.2,545.1 1434.2,583.3 1380.2,573.6"/>
</g>
<g transform="matrix(0.5307,0.0954,-0.0091,0.3803,1381.1,535.6)" font-size="5.3" fill="#2f2d12" stroke="#2f2d12" stroke-width="0.22" text-anchor="middle" font-family="Liberation Mono, DejaVu Sans Mono, monospace" font-weight="bold"><text x="50" y="31.9">2T9MS-015-034_PIECE</text><text x="50" y="37.6">1</text><text x="50" y="47.1">DESK</text><text x="50" y="57.8">UPRIGHT LENGTHWISE</text></g>
<g transform="matrix(0.3611,-0.1806,0.0000,0.3819,1434.2,545.1)" font-size="5.3" fill="#2f2d12" stroke="#2f2d12" stroke-width="0.22" text-anchor="middle" font-family="Liberation Mono, DejaVu Sans Mono, monospace" font-weight="bold"><text x="50" y="31.9">2T9MS-015-034_PIECE</text><text x="50" y="37.6">1</text><text x="50" y="47.1">DESK</text><text x="50" y="57.8">UPRIGHT LENGTHWISE</text></g>
<g transform="matrix(0.5207,0.0781,-0.3711,0.1632,1418.2,519.3)" font-size="5.3" fill="#2f2d12" stroke="#2f2d12" stroke-width="0.22" text-anchor="middle" font-family="Liberation Mono, DejaVu Sans Mono, monospace" font-weight="bold"><text x="50" y="31.9">2T9MS-015-034_PIECE</text><text x="50" y="37.6">1</text><text x="50" y="47.1">DESK</text><text x="50" y="57.8">UPRIGHT LENGTHWISE</text></g>
<g fill="#dbd87a" stroke="#0b0b0b" stroke-width="1.2" stroke-linejoin="round">
<polygon points="1213.3,599.2 1363.5,534.9 1409.9,542.4 1265.2,610.1" stroke-width="0.55"/>
<polygon points="1213.3,599.2 1265.2,610.1 1268.2,860.6 1220.1,844.2"/>
</g>
<polygon points="1316.0,586.3 1409.9,542.4 1402.9,756.3 1316.0,823.5" fill="#dbd87a" stroke="#0b0b0b" stroke-width="1.2"/>
<g fill="#dbd87a" stroke="#0b0b0b" stroke-width="1.2" stroke-linejoin="round">
<polygon points="1436.9,545.1 1462.5,532.6 1517.5,541.0 1495.3,554.2" stroke-width="0.55"/>
<polygon points="1495.3,554.2 1517.5,541.0 1508.9,672.9 1494.5,684.0"/>
<polygon points="1436.9,545.1 1495.3,554.2 1494.5,684.0 1431.8,670.1"/>
</g>
<g transform="matrix(0.5833,0.0903,-0.0512,1.2495,1436.9,545.1)" font-size="5.3" fill="#2f2d12" stroke="#2f2d12" stroke-width="0.22" text-anchor="middle" font-family="Liberation Mono, DejaVu Sans Mono, monospace" font-weight="bold"><text x="50" y="31.9">2T9MS-016-034_PIECE</text><text x="50" y="37.6">1</text><text x="50" y="47.1">TABLES</text><text x="50" y="57.8">UPRIGHT LENGTHWISE</text></g>
<g transform="matrix(0.2222,-0.1319,-0.0078,1.2983,1495.3,554.2)" font-size="5.3" fill="#2f2d12" stroke="#2f2d12" stroke-width="0.22" text-anchor="middle" font-family="Liberation Mono, DejaVu Sans Mono, monospace" font-weight="bold"><text x="50" y="31.9">2T9MS-016-034_PIECE</text><text x="50" y="37.6">1</text><text x="50" y="47.1">TABLES</text><text x="50" y="57.8">UPRIGHT LENGTHWISE</text></g>
<g transform="matrix(0.5498,0.0842,-0.2557,0.1258,1462.5,532.6)" font-size="5.3" fill="#2f2d12" stroke="#2f2d12" stroke-width="0.22" text-anchor="middle" font-family="Liberation Mono, DejaVu Sans Mono, monospace" font-weight="bold"><text x="50" y="31.9">2T9MS-016-034_PIECE</text><text x="50" y="37.6">1</text><text x="50" y="47.1">TABLES</text><text x="50" y="57.8">UPRIGHT LENGTHWISE</text></g>
<g fill="#dbd87a" stroke="#0b0b0b" stroke-width="1.2" stroke-linejoin="round">
<polygon points="1410.6,572.9 1434.4,560.7 1494.6,570.8 1471.7,583.3" stroke-width="0.55"/>
<polygon points="1471.7,583.3 1494.6,570.8 1487.6,690.0 1470.8,703.0"/>
<polygon points="1410.6,572.9 1471.7,583.3 1470.8,703.0 1406.7,688.0"/>
</g>
<g transform="matrix(0.6111,0.1042,-0.0382,1.1512,1410.6,572.9)" font-size="5.3" fill="#2f2d12" stroke="#2f2d12" stroke-width="0.22" text-anchor="middle" font-family="Liberation Mono, DejaVu Sans Mono, monospace" font-weight="bold"><text x="50" y="31.9">2T9MS-015-034_PIECE</text><text x="50" y="37.6">1</text><text x="50" y="47.1">DESK</text><text x="50" y="57.8">UPRIGHT LENGTHWISE</text></g>
<g transform="matrix(0.2292,-0.1250,-0.0087,1.1967,1471.7,583.3)" font-size="5.3" fill="#2f2d12" stroke="#2f2d12" stroke-width="0.22" text-anchor="middle" font-family="Liberation Mono, DejaVu Sans Mono, monospace" font-weight="bold"><text x="50" y="31.9">2T9MS-015-034_PIECE</text><text x="50" y="37.6">1</text><text x="50" y="47.1">DESK</text><text x="50" y="57.8">UPRIGHT LENGTHWISE</text></g>
<g transform="matrix(0.6020,0.1016,-0.2383,0.1224,1434.4,560.7)" font-size="5.3" fill="#2f2d12" stroke="#2f2d12" stroke-width="0.22" text-anchor="middle" font-family="Liberation Mono, DejaVu Sans Mono, monospace" font-weight="bold"><text x="50" y="31.9">2T9MS-015-034_PIECE</text><text x="50" y="37.6">1</text><text x="50" y="47.1">DESK</text><text x="50" y="57.8">UPRIGHT LENGTHWISE</text></g>
<g fill="#dbd87a" stroke="#0b0b0b" stroke-width="1.2" stroke-linejoin="round">
<polygon points="1409.2,587.5 1428.7,577.1 1487.6,587.5 1460.6,602.8" stroke-width="0.55"/>
<polygon points="1460.6,602.8 1487.6,587.5 1480.7,709.6 1455.0,730.0"/>
<polygon points="1409.2,587.5 1460.6,602.8 1455.0,730.0 1404.9,717.6"/>
</g>
<g transform="matrix(0.5139,0.1528,-0.0428,1.3006,1409.2,587.5)" font-size="5.3" fill="#2f2d12" stroke="#2f2d12" stroke-width="0.22" text-anchor="middle" font-family="Liberation Mono, DejaVu Sans Mono, monospace" font-weight="bold"><text x="50" y="31.9">2T9MS-015-034_PIECE</text><text x="50" y="37.6">1</text><text x="50" y="47.1">DESK</text><text x="50" y="57.8">UPRIGHT LENGTHWISE</text></g>
<g transform="matrix(0.2708,-0.1528,-0.0556,1.2722,1460.6,602.8)" font-size="5.3" fill="#2f2d12" stroke="#2f2d12" stroke-width="0.22" text-anchor="middle" font-family="Liberation Mono, DejaVu Sans Mono, monospace" font-weight="bold"><text x="50" y="31.9">2T9MS-015-034_PIECE</text><text x="50" y="37.6">1</text><text x="50" y="47.1">DESK</text><text x="50" y="57.8">UPRIGHT LENGTHWISE</text></g>
<g transform="matrix(0.5892,0.1044,-0.1955,0.1044,1428.7,577.1)" font-size="5.3" fill="#2f2d12" stroke="#2f2d12" stroke-width="0.22" text-anchor="middle" font-family="Liberation Mono, DejaVu Sans Mono, monospace" font-weight="bold"><text x="50" y="31.9">2T9MS-015-034_PIECE</text><text x="50" y="37.6">1</text><text x="50" y="47.1">DESK</text><text x="50" y="57.8">UPRIGHT LENGTHWISE</text></g>
<g fill="#dbd87a" stroke="#0b0b0b" stroke-width="1.2" stroke-linejoin="round">
<polygon points="1408.5,613.9 1443.7,593.7 1455.0,595.8 1421.0,616.0" stroke-width="0.55"/>
<polygon points="1421.0,616.0 1455.0,595.8 1448.7,729.1 1415.8,755.0"/>
<polygon points="1408.5,613.9 1421.0,616.0 1415.8,755.0 1403.9,751.8"/>
</g>
<g transform="matrix(0.1250,0.0208,-0.0455,1.3795,1408.5,613.9)" font-size="5.3" fill="#2f2d12" stroke="#2f2d12" stroke-width="0.22" text-anchor="middle" font-family="Liberation Mono, DejaVu Sans Mono, monospace" font-weight="bold"><text x="50" y="31.9">2T9MS-015-034_PIECE</text><text x="50" y="37.6">1</text><text x="50" y="47.1">DESK</text><text x="50" y="57.8">UPRIGHT LENGTHWISE</text></g>
<g transform="matrix(0.3403,-0.2014,-0.0514,1.3903,1421.0,616.0)" font-size="5.3" fill="#2f2d12" stroke="#2f2d12" stroke-width="0.22" text-anchor="middle" font-family="Liberation Mono, DejaVu Sans Mono, monospace" font-weight="bold"><text x="50" y="31.9">2T9MS-015-034_PIECE</text><text x="50" y="37.6">1</text><text x="50" y="47.1">DESK</text><text x="50" y="57.8">UPRIGHT LENGTHWISE</text></g>
<g transform="matrix(0.1133,0.0208,-0.3520,0.2014,1443.7,593.7)" font-size="5.3" fill="#2f2d12" stroke="#2f2d12" stroke-width="0.22" text-anchor="middle" font-family="Liberation Mono, DejaVu Sans Mono, monospace" font-weight="bold"><text x="50" y="31.9">2T9MS-015-034_PIECE</text><text x="50" y="37.6">1</text><text x="50" y="47.1">DESK</text><text x="50" y="57.8">UPRIGHT LENGTHWISE</text></g>
<g fill="#dbd87a" stroke="#0b0b0b" stroke-width="1.2" stroke-linejoin="round">
<polygon points="1562.9,536.2 1585.1,523.1 1599.7,525.1 1577.5,538.3" stroke-width="0.55"/>
<polygon points="1577.5,538.3 1599.7,525.1 1590.6,626.2 1568.3,644.2"/>
<polygon points="1562.9,536.2 1577.5,538.3 1568.3,644.2 1554.6,641.5"/>
</g>
<g transform="matrix(0.1458,0.0208,-0.0833,1.0522,1562.9,536.2)" font-size="5.3" fill="#2f2d12" stroke="#2f2d12" stroke-width="0.22" text-anchor="middle" font-family="Liberation Mono, DejaVu Sans Mono, monospace" font-weight="bold"><text x="50" y="31.9">2T9MS-016-034_PIECE</text><text x="50" y="37.6">1</text><text x="50" y="47.1">TABLES</text><text x="50" y="57.8">UPRIGHT LENGTHWISE</text></g>
<g transform="matrix(0.2222,-0.1319,-0.0917,1.0583,1577.5,538.3)" font-size="5.3" fill="#2f2d12" stroke="#2f2d12" stroke-width="0.22" text-anchor="middle" font-family="Liberation Mono, DejaVu Sans Mono, monospace" font-weight="bold"><text x="50" y="31.9">2T9MS-016-034_PIECE</text><text x="50" y="37.6">1</text><text x="50" y="47.1">TABLES</text><text x="50" y="57.8">UPRIGHT LENGTHWISE</text></g>
<g transform="matrix(0.1460,0.0205,-0.2221,0.1316,1585.1,523.1)" font-size="5.3" fill="#2f2d12" stroke="#2f2d12" stroke-width="0.22" text-anchor="middle" font-family="Liberation Mono, DejaVu Sans Mono, monospace" font-weight="bold"><text x="50" y="31.9">2T9MS-016-034_PIECE</text><text x="50" y="37.6">1</text><text x="50" y="47.1">TABLES</text><text x="50" y="57.8">UPRIGHT LENGTHWISE</text></g>
<g fill="#dbd87a" stroke="#0b0b0b" stroke-width="1.2" stroke-linejoin="round">
<polygon points="1599.7,546.7 1624.0,530.7 1633.8,532.1 1608.1,548.8" stroke-width="0.55"/>
<polygon points="1608.1,548.8 1633.8,532.1 1626.2,607.2 1601.7,627.5"/>
<polygon points="1599.7,546.7 1608.1,548.8 1601.7,627.5 1592.5,625.8"/>
</g>
<g transform="matrix(0.0833,0.0208,-0.0717,0.7914,1599.7,546.7)" font-size="5.3" fill="#2f2d12" stroke="#2f2d12" stroke-width="0.22" text-anchor="middle" font-family="Liberation Mono, DejaVu Sans Mono, monospace" font-weight="bold"><text x="50" y="31.9">2T9MS-013-034_PIECE</text><text x="50" y="37.6">1</text><text x="50" y="47.1">FILE CABINET</text><text x="50" y="57.8">UPRIGHT LENGTHWISE</text></g>
<g transform="matrix(0.2569,-0.1667,-0.0639,0.7875,1608.1,548.8)" font-size="5.3" fill="#2f2d12" stroke="#2f2d12" stroke-width="0.22" text-anchor="middle" font-family="Liberation Mono, DejaVu Sans Mono, monospace" font-weight="bold"><text x="50" y="31.9">2T9MS-013-034_PIECE</text><text x="50" y="37.6">1</text><text x="50" y="47.1">FILE CABINET</text><text x="50" y="57.8">UPRIGHT LENGTHWISE</text></g>
<g transform="matrix(0.0977,0.0138,-0.2426,0.1596,1624.0,530.7)" font-size="5.3" fill="#2f2d12" stroke="#2f2d12" stroke-width="0.22" text-anchor="middle" font-family="Liberation Mono, DejaVu Sans Mono, monospace" font-weight="bold"><text x="50" y="31.9">2T9MS-013-034_PIECE</text><text x="50" y="37.6">1</text><text x="50" y="47.1">FILE CABINET</text><text x="50" y="57.8">UPRIGHT LENGTHWISE</text></g>
<g fill="#dbd87a" stroke="#0b0b0b" stroke-width="1.2" stroke-linejoin="round">
<polygon points="1494.2,595.3 1529.5,573.3 1565.7,579.3 1531.0,603.6" stroke-width="0.55"/>
<polygon points="1531.0,603.6 1565.7,579.3 1558.7,666.2 1525.0,694.2"/>
<polygon points="1494.2,595.3 1531.0,603.6 1525.0,694.2 1488.8,686.1"/>
</g>
<g transform="matrix(0.3681,0.0833,-0.0538,0.9079,1494.2,595.3)" font-size="5.3" fill="#2f2d12" stroke="#2f2d12" stroke-width="0.22" text-anchor="middle" font-family="Liberation Mono, DejaVu Sans Mono, monospace" font-weight="bold"><text x="50" y="31.9">2T9MS-014-034_PIECE</text><text x="50" y="37.6">1</text><text x="50" y="47.1">CUBE CHAIRS</text><text x="50" y="57.8">UPRIGHT LENGTHWISE</text></g>
<g transform="matrix(0.3472,-0.2431,-0.0597,0.9056,1531.0,603.6)" font-size="5.3" fill="#2f2d12" stroke="#2f2d12" stroke-width="0.22" text-anchor="middle" font-family="Liberation Mono, DejaVu Sans Mono, monospace" font-weight="bold"><text x="50" y="31.9">2T9MS-014-034_PIECE</text><text x="50" y="37.6">1</text><text x="50" y="47.1">CUBE CHAIRS</text><text x="50" y="57.8">UPRIGHT LENGTHWISE</text></g>
<g transform="matrix(0.3619,0.0605,-0.3534,0.2202,1529.5,573.3)" font-size="5.3" fill="#2f2d12" stroke="#2f2d12" stroke-width="0.22" text-anchor="middle" font-family="Liberation Mono, DejaVu Sans Mono, monospace" font-weight="bold"><text x="50" y="31.9">2T9MS-014-034_PIECE</text><text x="50" y="37.6">1</text><text x="50" y="47.1">CUBE CHAIRS</text><text x="50" y="57.8">UPRIGHT LENGTHWISE</text></g>
<g transform="matrix(0.4634,0.0750,-0.7211,0.3088,1363.5,534.9)" font-size="5.3" fill="#2f2d12" stroke="#2f2d12" stroke-width="0.22" text-anchor="middle" font-family="Liberation Mono, DejaVu Sans Mono, monospace" font-weight="bold"><text x="50" y="31.9">2T9MS-013-034_PIECE</text><text x="50" y="37.6">1</text><text x="50" y="47.1">FILE CABINET</text><text x="50" y="57.8">UPRIGHT LENGTHWISE</text></g>
<line x1="1291.4" y1="565.7" x2="1340.4" y2="574.9" stroke="#0b0b0b" stroke-width="0.6"/>
<line x1="1352.5" y1="683.3" x2="1409.2" y2="651.7" stroke="#0b0b0b" stroke-width="1.2"/>
<line x1="1352.5" y1="686.0" x2="1409.4" y2="654.3" stroke="#0b0b0b" stroke-width="0.7"/>
<g transform="matrix(0.5630,-0.2635,-0.0060,1.0850,1353.6,568.8)" font-size="5.3" fill="#2f2d12" stroke="#2f2d12" stroke-width="0.22" text-anchor="middle" font-family="Liberation Mono, DejaVu Sans Mono, monospace" font-weight="bold"><text x="50" y="31.9">2T9MS-013-034_PIECE</text><text x="50" y="37.6">1</text><text x="50" y="47.1">FILE CABINET</text><text x="50" y="57.8">UPRIGHT LENGTHWISE</text></g>
<g transform="matrix(0.5700,-0.3260,-0.0050,1.1100,1352.5,684.0)" font-size="5.3" fill="#2f2d12" stroke="#2f2d12" stroke-width="0.22" text-anchor="middle" font-family="Liberation Mono, DejaVu Sans Mono, monospace" font-weight="bold"><text x="50" y="31.9">2T9MS-014-034_PIECE</text><text x="50" y="37.6">1</text><text x="50" y="47.1">CUBE CHAIRS</text><text x="50" y="57.8">UPRIGHT LENGTHWISE</text></g>
<line x1="1498.3" y1="514.7" x2="1548.3" y2="488.3" stroke="#0b0b0b" stroke-width="0.7"/>
<line x1="1448.3" y1="505.7" x2="1469.2" y2="509.2" stroke="#0b0b0b" stroke-width="1.2"/>
<polygon points="1172.0,668.0 1202.8,652.8 1240.0,661.0 1240.0,720.0 1170.0,720.0" fill="#dbd87a" stroke="#0b0b0b" stroke-width="0.8"/>
<line x1="1176.7" y1="702.2" x2="1215.0" y2="711.6" stroke="#0b0b0b" stroke-width="1.3"/>
<line x1="1180.0" y1="701.1" x2="1237.8" y2="671.7" stroke="#0b0b0b" stroke-width="0.8"/>
<line x1="1176.7" y1="702.2" x2="1176.9" y2="708.0" stroke="#0b0b0b" stroke-width="0.8"/>
<g transform="matrix(0.4800,0.1100,-0.3400,0.1900,1197.0,658.0)" font-size="5.3" fill="#2f2d12" stroke="#2f2d12" stroke-width="0.22" text-anchor="middle" font-family="Liberation Mono, DejaVu Sans Mono, monospace" font-weight="bold"><text x="50" y="31.9">2T9MS-013-034_PIECE</text><text x="50" y="37.6">1</text><text x="50" y="47.1">FILE CABINET</text><text x="50" y="57.8">UPRIGHT LENGTHWISE</text></g>
<g fill="#0a6291" stroke="#0b0b0b" stroke-width="1.2" stroke-linejoin="round">
<polygon points="1283.0,709.8 1324.3,684.9 1361.4,693.9 1321.1,719.7" stroke-width="0.55"/>
<polygon points="1321.1,719.7 1361.4,693.9 1359.4,799.4 1320.6,830.0"/>
<polygon points="1283.0,709.8 1321.1,719.7 1320.6,830.0 1283.7,818.3"/>
</g>
<g transform="matrix(0.4030,-0.2580,-0.0050,1.1030,1321.1,719.7)" font-size="5.3" fill="#032539" stroke="#032539" stroke-width="0.22" text-anchor="middle" font-family="Liberation Mono, DejaVu Sans Mono, monospace" font-weight="bold"><text x="50" y="31.9">921MS-005-030_PIECE</text><text x="50" y="37.6">1</text><text x="50" y="47.1">BOOKCASE</text><text x="50" y="57.8">UPRIGHT LENGTHWISE</text></g>
<g fill="#0a6291" stroke="#0b0b0b" stroke-width="1.2" stroke-linejoin="round">
<polygon points="1235.8,584.7 1302.0,556.7 1353.3,565.8 1290.8,595.3" stroke-width="0.55"/>
<polygon points="1290.8,595.3 1353.3,565.8 1351.4,690.4 1291.3,728.3"/>
<polygon points="1235.8,584.7 1290.8,595.3 1291.3,728.3 1238.5,714.1"/>
</g>
<g transform="matrix(0.5500,0.1067,0.0267,1.2946,1235.8,584.7)" font-size="5.3" fill="#032539" stroke="#032539" stroke-width="0.22" text-anchor="middle" font-family="Liberation Mono, DejaVu Sans Mono, monospace" font-weight="bold"><text x="50" y="31.9">921MS-007-030_PIECE</text><text x="50" y="37.6">1</text><text x="50" y="47.1">CONFERENCE TABLE</text><text x="50" y="57.8">UPRIGHT LENGTHWISE</text></g>
<g transform="matrix(0.6250,-0.2950,0.0047,1.3297,1290.8,595.3)" font-size="5.3" fill="#032539" stroke="#032539" stroke-width="0.22" text-anchor="middle" font-family="Liberation Mono, DejaVu Sans Mono, monospace" font-weight="bold"><text x="50" y="31.9">921MS-007-030_PIECE</text><text x="50" y="37.6">1</text><text x="50" y="47.1">CONFERENCE TABLE</text><text x="50" y="57.8">UPRIGHT LENGTHWISE</text></g>
<g transform="matrix(0.5129,0.0914,-0.6621,0.2798,1302.0,556.7)" font-size="5.3" fill="#032539" stroke="#032539" stroke-width="0.22" text-anchor="middle" font-family="Liberation Mono, DejaVu Sans Mono, monospace" font-weight="bold"><text x="50" y="31.9">921MS-007-030_PIECE</text><text x="50" y="37.6">1</text><text x="50" y="47.1">CONFERENCE TABLE</text><text x="50" y="57.8">UPRIGHT LENGTHWISE</text></g>
<g fill="#0a6291" stroke="#0b0b0b" stroke-width="1.2" stroke-linejoin="round">
<polygon points="1190.0,717.5 1251.3,683.9 1300.8,696.2 1240.4,732.5" stroke-width="0.55"/>
<polygon points="1240.4,732.5 1300.8,696.2 1300.9,845.4 1243.6,890.5"/>
<polygon points="1190.0,717.5 1240.4,732.5 1243.6,890.5 1195.6,873.2"/>
</g>
<g transform="matrix(0.5040,0.1500,0.0565,1.5571,1190.0,717.5)" font-size="5.3" fill="#032539" stroke="#032539" stroke-width="0.22" text-anchor="middle" font-family="Liberation Mono, DejaVu Sans Mono, monospace" font-weight="bold"><text x="50" y="31.9">921MS-002-030_PIECE</text><text x="50" y="37.6">2</text><text x="50" y="47.1">ELLIPTICAL</text><text x="50" y="57.8">UPRIGHT LENGTHWISE</text></g>
<g transform="matrix(0.6040,-0.3625,0.0319,1.5805,1240.4,732.5)" font-size="5.3" fill="#032539" stroke="#032539" stroke-width="0.22" text-anchor="middle" font-family="Liberation Mono, DejaVu Sans Mono, monospace" font-weight="bold"><text x="50" y="31.9">921MS-002-030_PIECE</text><text x="50" y="37.6">2</text><text x="50" y="47.1">ELLIPTICAL</text><text x="50" y="57.8">UPRIGHT LENGTHWISE</text></g>
<g transform="matrix(0.4946,0.1239,-0.6134,0.3364,1251.3,683.9)" font-size="5.3" fill="#032539" stroke="#032539" stroke-width="0.22" text-anchor="middle" font-family="Liberation Mono, DejaVu Sans Mono, monospace" font-weight="bold"><text x="50" y="31.9">921MS-002-030_PIECE</text><text x="50" y="37.6">2</text><text x="50" y="47.1">ELLIPTICAL</text><text x="50" y="57.8">UPRIGHT LENGTHWISE</text></g>
<g fill="#0a6291" stroke="#0b0b0b" stroke-width="1.2" stroke-linejoin="round">
<polygon points="1084.0,754.0 1164.0,711.8 1214.2,725.8 1134.0,769.0" stroke-width="0.55"/>
<polygon points="1134.0,769.0 1214.2,725.8 1218.2,864.1 1142.0,920.0"/>
<polygon points="1084.0,754.0 1134.0,769.0 1142.0,920.0 1094.5,901.0"/>
</g>
<g transform="matrix(0.5000,0.1500,0.1048,1.4703,1084.0,754.0)" font-size="5.3" fill="#032539" stroke="#032539" stroke-width="0.22" text-anchor="middle" font-family="Liberation Mono, DejaVu Sans Mono, monospace" font-weight="bold"><text x="50" y="31.9">921MS-002-030_PIECE</text><text x="50" y="37.6">1</text><text x="50" y="47.1">ELLIPTICAL</text><text x="50" y="57.8">UPRIGHT WIDTHWISE</text></g>
<g transform="matrix(0.8020,-0.4320,0.0800,1.5100,1134.0,769.0)" font-size="5.3" fill="#032539" stroke="#032539" stroke-width="0.22" text-anchor="middle" font-family="Liberation Mono, DejaVu Sans Mono, monospace" font-weight="bold"><text x="50" y="31.9">921MS-002-030_PIECE</text><text x="50" y="37.6">1</text><text x="50" y="47.1">ELLIPTICAL</text><text x="50" y="57.8">UPRIGHT WIDTHWISE</text></g>
<g transform="matrix(0.5019,0.1397,-0.8001,0.4217,1164.0,711.8)" font-size="5.3" fill="#032539" stroke="#032539" stroke-width="0.22" text-anchor="middle" font-family="Liberation Mono, DejaVu Sans Mono, monospace" font-weight="bold"><text x="50" y="31.9">921MS-002-030_PIECE</text><text x="50" y="37.6">1</text><text x="50" y="47.1">ELLIPTICAL</text><text x="50" y="57.8">UPRIGHT WIDTHWISE</text></g>
<g fill="#0a6291" stroke="#0b0b0b" stroke-width="1.5" stroke-linejoin="round">
<polygon points="909.2,640.8 1012.7,604.2 1063.2,616.3 962.0,655.0" stroke-width="0.55"/>
<polygon points="962.0,655.0 1063.2,616.3 1073.6,755.0 978.0,805.0"/>
<polygon points="909.2,640.8 962.0,655.0 978.0,805.0 927.2,786.3"/>
</g>
<g transform="matrix(0.5280,0.1420,0.1799,1.4549,909.2,640.8)" font-size="5.3" fill="#032539" stroke="#032539" stroke-width="0.22" text-anchor="middle" font-family="Liberation Mono, DejaVu Sans Mono, monospace" font-weight="bold"><text x="50" y="31.9">921MS-006-030_PIECE</text><text x="50" y="37.6">1</text><text x="50" y="47.1">CONFERENCE TABLE</text><text x="50" y="57.8">UPRIGHT LENGTHWISE</text></g>
<g transform="matrix(1.0121,-0.3870,0.1600,1.5000,962.0,655.0)" font-size="5.3" fill="#032539" stroke="#032539" stroke-width="0.22" text-anchor="middle" font-family="Liberation Mono, DejaVu Sans Mono, monospace" font-weight="bold"><text x="50" y="31.9">921MS-006-030_PIECE</text><text x="50" y="37.6">1</text><text x="50" y="47.1">CONFERENCE TABLE</text><text x="50" y="57.8">UPRIGHT LENGTHWISE</text></g>
<g transform="matrix(0.5054,0.1205,-1.0348,0.3656,1012.7,604.2)" font-size="5.3" fill="#032539" stroke="#032539" stroke-width="0.22" text-anchor="middle" font-family="Liberation Mono, DejaVu Sans Mono, monospace" font-weight="bold"><text x="50" y="31.9">921MS-006-030_PIECE</text><text x="50" y="37.6">1</text><text x="50" y="47.1">CONFERENCE TABLE</text><text x="50" y="57.8">UPRIGHT LENGTHWISE</text></g>
<g fill="#0a6291" stroke="#0b0b0b" stroke-width="1.5" stroke-linejoin="round">
<polygon points="1013.3,628.7 1066.7,608.6 1172.5,633.3 1123.3,654.7" stroke-width="0.55"/>
<polygon points="1123.3,654.7 1172.5,633.3 1178.7,785.4 1132.3,814.0"/>
<polygon points="1013.3,628.7 1123.3,654.7 1132.3,814.0 1026.8,778.0"/>
</g>
<g transform="matrix(1.1000,0.2600,0.1353,1.4931,1013.3,628.7)" font-size="5.3" fill="#032539" stroke="#032539" stroke-width="0.22" text-anchor="middle" font-family="Liberation Mono, DejaVu Sans Mono, monospace" font-weight="bold"><text x="50" y="31.9">921MS-001-030_PIECE</text><text x="50" y="37.6">1</text><text x="50" y="47.1">ELLIPTICAL</text><text x="50" y="57.8">UPRIGHT WIDTHWISE</text></g>
<g transform="matrix(0.4920,-0.2140,0.0900,1.5930,1123.3,654.7)" font-size="5.3" fill="#032539" stroke="#032539" stroke-width="0.22" text-anchor="middle" font-family="Liberation Mono, DejaVu Sans Mono, monospace" font-weight="bold"><text x="50" y="31.9">921MS-001-030_PIECE</text><text x="50" y="37.6">1</text><text x="50" y="47.1">ELLIPTICAL</text><text x="50" y="57.8">UPRIGHT WIDTHWISE</text></g>
<g transform="matrix(1.0577,0.2470,-0.5343,0.2010,1066.7,608.6)" font-size="5.3" fill="#032539" stroke="#032539" stroke-width="0.22" text-anchor="middle" font-family="Liberation Mono, DejaVu Sans Mono, monospace" font-weight="bold"><text x="50" y="31.9">921MS-001-030_PIECE</text><text x="50" y="37.6">1</text><text x="50" y="47.1">ELLIPTICAL</text><text x="50" y="57.8">UPRIGHT WIDTHWISE</text></g>
<g fill="#0a6291" stroke="#0b0b0b" stroke-width="1.5" stroke-linejoin="round">
<polygon points="971.0,790.0 1021.9,764.3 1128.9,800.0 1078.7,828.0" stroke-width="0.55"/>
<polygon points="1078.7,828.0 1128.9,800.0 1137.5,949.0 1091.0,984.4"/>
<polygon points="971.0,790.0 1078.7,828.0 1091.0,984.4 987.2,937.9"/>
</g>
<g transform="matrix(1.0770,0.3800,0.1617,1.4786,971.0,790.0)" font-size="5.3" fill="#032539" stroke="#032539" stroke-width="0.22" text-anchor="middle" font-family="Liberation Mono, DejaVu Sans Mono, monospace" font-weight="bold"><text x="50" y="31.9">921MS-003-030_PIECE</text><text x="50" y="37.6">2</text><text x="50" y="47.1">ELLIPTICAL</text><text x="50" y="57.8">UPRIGHT WIDTHWISE</text></g>
<g transform="matrix(0.5020,-0.2800,0.1230,1.5640,1078.7,828.0)" font-size="5.3" fill="#032539" stroke="#032539" stroke-width="0.22" text-anchor="middle" font-family="Liberation Mono, DejaVu Sans Mono, monospace" font-weight="bold"><text x="50" y="31.9">921MS-003-030_PIECE</text><text x="50" y="37.6">2</text><text x="50" y="47.1">ELLIPTICAL</text><text x="50" y="57.8">UPRIGHT WIDTHWISE</text></g>
<g transform="matrix(1.0703,0.3574,-0.5087,0.2574,1021.9,764.3)" font-size="5.3" fill="#032539" stroke="#032539" stroke-width="0.22" text-anchor="middle" font-family="Liberation Mono, DejaVu Sans Mono, monospace" font-weight="bold"><text x="50" y="31.9">921MS-003-030_PIECE</text><text x="50" y="37.6">2</text><text x="50" y="47.1">ELLIPTICAL</text><text x="50" y="57.8">UPRIGHT WIDTHWISE</text></g>
<g fill="#0a6291" stroke="#0b0b0b" stroke-width="1.5" stroke-linejoin="round">
<polygon points="1130.8,799.2 1219.8,745.8 1275.0,761.7 1188.3,818.3" stroke-width="0.55"/>
<polygon points="1188.3,818.3 1275.0,761.7 1276.3,903.6 1195.5,971.0"/>
<polygon points="1130.8,799.2 1188.3,818.3 1195.5,971.0 1139.2,947.6"/>
</g>
<g transform="matrix(0.5750,0.1910,0.0844,1.4843,1130.8,799.2)" font-size="5.3" fill="#032539" stroke="#032539" stroke-width="0.22" text-anchor="middle" font-family="Liberation Mono, DejaVu Sans Mono, monospace" font-weight="bold"><text x="50" y="31.9">921MS-003-030_PIECE</text><text x="50" y="37.6">1</text><text x="50" y="47.1">ELLIPTICAL</text><text x="50" y="57.8">UPRIGHT LENGTHWISE</text></g>
<g transform="matrix(0.8670,-0.5660,0.0720,1.5270,1188.3,818.3)" font-size="5.3" fill="#032539" stroke="#032539" stroke-width="0.22" text-anchor="middle" font-family="Liberation Mono, DejaVu Sans Mono, monospace" font-weight="bold"><text x="50" y="31.9">921MS-003-030_PIECE</text><text x="50" y="37.6">1</text><text x="50" y="47.1">ELLIPTICAL</text><text x="50" y="57.8">UPRIGHT LENGTHWISE</text></g>
<g transform="matrix(0.5516,0.1590,-0.8904,0.5340,1219.8,745.8)" font-size="5.3" fill="#032539" stroke="#032539" stroke-width="0.22" text-anchor="middle" font-family="Liberation Mono, DejaVu Sans Mono, monospace" font-weight="bold"><text x="50" y="31.9">921MS-003-030_PIECE</text><text x="50" y="37.6">1</text><text x="50" y="47.1">ELLIPTICAL</text><text x="50" y="57.8">UPRIGHT LENGTHWISE</text></g>
<g stroke="#1a1a1a" stroke-width="0.9" fill="none"><line x1="879.6" y1="636.7" x2="1581" y2="397"/><line x1="1113.3" y1="702.1" x2="1712" y2="408.75"/><line x1="879.6" y1="636.7" x2="1113.3" y2="702.1"/><line x1="879.6" y1="636.7" x2="918.3" y2="927.9"/><line x1="1113.3" y1="702.1" x2="1133.5" y2="1028.5"/><line x1="918.3" y1="927.9" x2="1133.5" y2="1028.5"/><line x1="1133.5" y1="1028.5" x2="1695.5" y2="555.5"/><line x1="1712" y1="408.75" x2="1695.5" y2="555.5"/><line x1="1581" y1="397" x2="1712" y2="408.75"/></g>
<line x1="1580.8" y1="397" x2="1581.6" y2="382.5" stroke="#ff00ff" stroke-width="12.5"/>
<line x1="1579.9" y1="414" x2="1580.8" y2="397" stroke="#e600e6" stroke-width="12.5"/>
<line x1="1678.5" y1="551.2" x2="1695.5" y2="553.4" stroke="#00e6e6" stroke-width="10.5"/>
<line x1="1695.5" y1="553.4" x2="1712.5" y2="555.6" stroke="#00ffff" stroke-width="10.5"/>
<line x1="918.3" y1="927.9" x2="944" y2="911.5" stroke="#e6e600" stroke-width="23.6" />
<ellipse cx="945" cy="910.8" rx="5" ry="11.8" transform="rotate(-31 945 910.8)" fill="#e6e600"/>
<line x1="890" y1="945.3" x2="918.3" y2="927.9" stroke="#ffff00" stroke-width="23.6"/>
<ellipse cx="890" cy="945.3" rx="5" ry="11.8" transform="rotate(-31 890 945.3)" fill="#ffff00"/>
<ellipse cx="887" cy="947.3" rx="3" ry="6.3" transform="rotate(-31 887 947.3)" fill="#0000ff"/>
</svg>
<div class="abs" style="left:1919px;top:897px;width:1px;height:21px;background:#0a0a18"></div>
</div>
</body>
</html>
